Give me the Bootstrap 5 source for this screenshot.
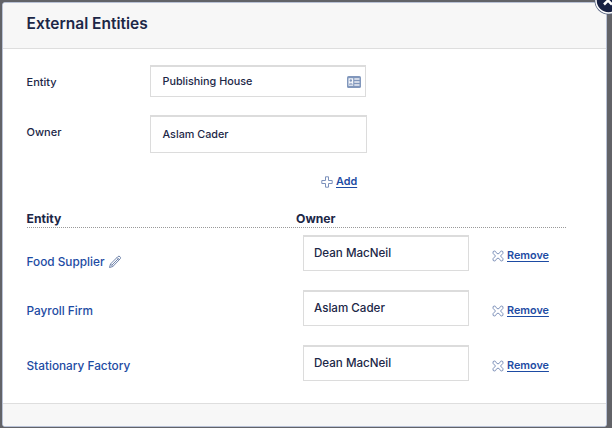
<!DOCTYPE html>
<html lang="en">
<head>
<meta charset="utf-8">
<meta name="viewport" content="width=device-width, initial-scale=1">
<title>External Entities</title>
<link href="https://cdn.jsdelivr.net/npm/bootstrap@5.3.0/dist/css/bootstrap.min.css" rel="stylesheet">
<style>
body{background:#626368;font-family:Inter,"Liberation Sans",sans-serif;font-size:11px;line-height:16px;color:#1c2747;font-weight:500;height:428px;overflow:hidden;padding:2px 5px 1px 2px}
.dialog-box{height:425px;border:1px solid #b9c2d6;border-radius:3px;overflow:hidden;color:#1c2747}
.dialog-head{height:46px;background:#f7f7f7;border-bottom:1px solid #dedede;padding:0 24px 4px 23.5px}
.dialog-head h1{font-size:15.5px;line-height:20px;font-weight:600;color:#1c2747}
.dialog-main{padding:16px 39px 0 23.5px}
.dialog-foot{height:23px;background:#f7f7f7;border-top:1px solid #dedede}
.field-name{width:123.5px;padding-top:2px}
.field-owner{padding-top:14px}
.field{border:1px solid #dcdcdc;border-top-width:2px;background:#fff;padding:0 11.5px}
.field-one{width:216px;height:32px;font-size:10.8px;padding-top:1px}
.field-two{width:217px;height:38px;margin-top:18px;padding-top:1px;font-size:10.8px}
.add-line{height:16px;margin-top:21px;padding-left:294.5px}
.act{color:#1d4ba3;font-weight:600;font-size:10.8px;margin-left:3px;text-underline-offset:1.5px}
.grid-head{width:539.5px;height:17px;margin-top:21px;border-bottom:1px dotted #999;font-size:12.2px;font-weight:700}
.entity-col{width:269.5px;flex:none}
.entity-rows{padding-top:7px}
.entity-row{height:36px;margin-bottom:19px}
.entity-row .entity-col{width:276.5px;padding-top:6px;color:#1d4ba3;font-size:11.8px}
.entity-row .entity-first{padding-top:17px}
.owner{width:166px;height:36px;font-size:11.6px;padding:0 10px 2px}
.remove{margin-left:23px;padding-top:5px}
.close-disc{top:-14px;left:593.5px;width:29px;height:29px}
svg{flex:none;display:block}
</style>
</head>
<body>
<main class="dialog-box d-flex flex-column bg-white">
  <header class="dialog-head d-flex align-items-center flex-shrink-0"><h1 class="m-0">External Entities</h1></header>
  <section class="dialog-main flex-grow-1">
    <div class="d-flex align-items-center">
      <span class="field-name">Entity</span>
      <div class="field field-one d-flex align-items-center justify-content-between pe-1"><span>Publishing House</span>
        <svg width="14" height="12" viewBox="0 0 14 12"><rect width="14" height="12" rx="1.600" fill="#8197bc"/><path d="M1.500 2.200h4.700v7.600H1.500z" fill="#f5f7fb"/><circle cx="3.800" cy="4.500" r="1.200" fill="#8197bc"/><path d="M2 8q1.800-2.500 3.700 0v1H2z" fill="#a9b7d1"/><path d="M7.300 3H12.500M7.300 6H12.500M7.300 9H12.500" stroke="#eceef3" stroke-width="1.300"/></svg>
      </div>
    </div>
    <div class="d-flex align-items-center">
      <span class="field-name field-owner">Owner</span>
      <div class="field field-two d-flex align-items-center">Aslam Cader</div>
    </div>
    <div class="add-line d-flex align-items-center">
      <svg width="12" height="12" viewBox="0 0 12 12" fill="none" stroke="#7c91bb" stroke-linejoin="round"><path d="M4.500 .8h3v3.700h3.700v3H7.500v3.700h-3V7.500H.8v-3h3.700z"/></svg>
      <a class="act" href="#">Add</a>
    </div>
    <div class="grid-head d-flex"><span class="entity-col">Entity</span><span>Owner</span></div>
    <div class="entity-rows">
      <div class="entity-row d-flex align-items-center">
        <div class="entity-col entity-first d-flex align-items-center"><span>Food Supplier</span>
          <svg class="ms-1" width="14" height="14" viewBox="0 0 14 14" fill="none" stroke="#6f83aa"><path d="M1.500 12.500l1-3.500L10 1.500q1-.7 2 .2t.3 2L4.800 11.500zM2.500 9l2.300 2.500M9 2.500L11.500 5M4 10l6.500-6.500"/></svg>
        </div>
        <div class="field owner d-flex align-items-center">Dean MacNeil</div>
        <div class="remove d-flex align-items-center"><svg width="12" height="12" viewBox="0 0 12 12" fill="none" stroke="#7f93bb"><path id="cross" d="M1 3.300Q.6 1.100 2.200 1T4.200 2.700L6 4l1.800-1.300Q8.200.9 9.800 1T11 3.300L8.500 6 11 8.700q.4 2.200-1.200 2.300T7.800 9.300L6 8 4.200 9.300Q3.800 11.100 2.200 11T1 8.700L3.500 6z"/></svg><a class="act" href="#">Remove</a></div>
      </div>
      <div class="entity-row d-flex align-items-center">
        <div class="entity-col">Payroll Firm</div>
        <div class="field owner d-flex align-items-center">Aslam Cader</div>
        <div class="remove d-flex align-items-center"><svg width="12" height="12" viewBox="0 0 12 12" fill="none" stroke="#7f93bb"><use href="#cross"/></svg><a class="act" href="#">Remove</a></div>
      </div>
      <div class="entity-row d-flex align-items-center">
        <div class="entity-col">Stationary Factory</div>
        <div class="field owner d-flex align-items-center">Dean MacNeil</div>
        <div class="remove d-flex align-items-center"><svg width="12" height="12" viewBox="0 0 12 12" fill="none" stroke="#7f93bb"><use href="#cross"/></svg><a class="act" href="#">Remove</a></div>
      </div>
    </div>
  </section>
  <footer class="dialog-foot flex-shrink-0"></footer>
</main>
<button class="close-disc position-absolute border-0 bg-transparent p-0" type="button" aria-label="Close"><svg width="29" height="29" viewBox="0 0 29 29"><circle cx="14.500" cy="14.500" r="14" fill="#53607e"/><circle cx="14.500" cy="14.500" r="12.500" fill="#172143" stroke="#fff" stroke-width="1.500"/><path d="M10 10.500l8 8m0-8l-8 8" stroke="#fff" stroke-width="2.500"/></svg></button>
<script src="https://cdn.jsdelivr.net/npm/bootstrap@5.3.0/dist/js/bootstrap.bundle.min.js"></script>
</body>
</html>
